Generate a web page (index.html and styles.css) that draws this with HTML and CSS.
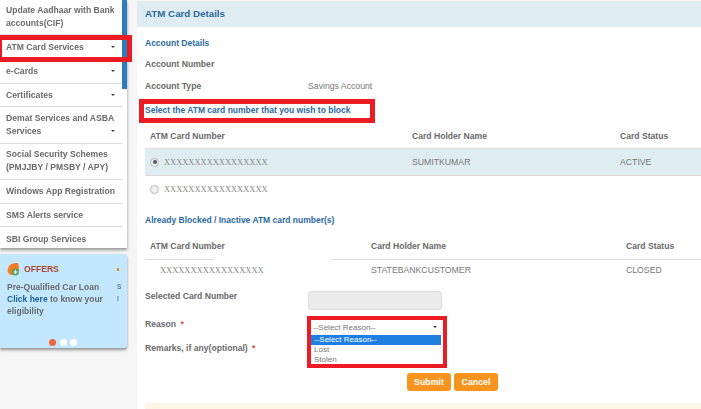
FILE: index.html
```html
<!DOCTYPE html>
<html lang="en">
<head>
<meta charset="utf-8">
<title>ATM Card Details</title>
<link rel="stylesheet" href="styles.css">
</head>
<body>
<div class="page">
  <aside class="side">
    <nav class="menu">
      <a class="item top">Update Aadhaar with Bank accounts(CIF)</a>
      <a class="item atm caret">ATM Card Services</a>
      <a class="item caret">e-Cards</a>
      <a class="item caret">Certificates</a>
      <a class="item tall caret low">Demat Services and ASBA Services</a>
      <a class="item tall">Social Security Schemes (PMJJBY / PMSBY / APY)</a>
      <a class="item">Windows App Registration</a>
      <a class="item">SMS Alerts service</a>
      <a class="item last">SBI Group Services</a>
      <span class="scroll"></span>
    </nav>
    <section class="offers">
      <div class="track">
        <div class="slide">
          <header class="offers-head">
            <svg class="offers-icon" width="13" height="14" viewBox="0 0 13 14" aria-hidden="true">
              <path d="M0.5 8 L2 4 Q5 0.5 11 1 L12 6 Q12 12 6 13 Q0.5 13 0.5 8Z" fill="#f47b20"/>
              <circle cx="8.5" cy="10" r="3.4" fill="#4aa564"/>
              <path d="M8.5 8v4M6.5 10h4" stroke="#fff" stroke-width="1.2"/>
            </svg>
            <span>OFFERS</span>
          </header>
          <p class="offers-text">Pre-Qualified Car Loan<br><b>Click here</b> to know your<br>eligibility</p>
        </div>
        <div class="peek">
          <header class="offers-head"><i class="offers-dash"></i></header>
          <p class="peek-text">S<br>l</p>
        </div>
      </div>
      <div class="dots"><i class="dot on"></i><i class="dot"></i><i class="dot"></i></div>
    </section>
  </aside>

  <main class="panel">
    <h1 class="panel-title">ATM Card Details</h1>
    <div class="body">
      <h2 class="sub first">Account Details</h2>
      <div class="kv"><b>Account Number</b><span></span></div>
      <div class="kv"><b>Account Type</b><span>Savings Account</span></div>
      <h2 class="sub select-title">Select the ATM card number that you wish to block</h2>

      <div class="cards active-cards">
        <div class="row head"><b>ATM Card Number</b><b>Card Holder Name</b><b>Card Status</b></div>
        <div class="row picked">
          <label class="num"><i class="radio on"></i><span class="mask">XXXXXXXXXXXXXXXXX</span></label>
          <span>SUMITKUMAR</span><span>ACTIVE</span>
        </div>
        <div class="row plain">
          <label class="num"><i class="radio"></i><span class="mask">XXXXXXXXXXXXXXXXX</span></label>
          <span></span><span></span>
        </div>
      </div>

      <h2 class="sub blocked-title">Already Blocked / Inactive ATM card number(s)</h2>

      <div class="cards blocked-cards">
        <div class="row head"><b>ATM Card Number</b><b>Card Holder Name</b><b>Card Status</b></div>
        <div class="row closed">
          <span class="mask indent">XXXXXXXXXXXXXXXXX</span>
          <span>STATEBANKCUSTOMER</span><span>CLOSED</span>
        </div>
      </div>

      <form class="form">
        <b class="label">Selected Card Number</b>
        <div class="readonly"></div>
        <b class="label">Reason <em>*</em></b>
        <div class="dropdown">
          <div class="select">--Select Reason--<i class="select-caret"></i></div>
          <ul class="options">
            <li class="sel">--Select Reason--</li>
            <li>Lost</li>
            <li>Stolen</li>
          </ul>
        </div>
        <b class="label">Remarks, if any(optional) <em>*</em></b>
        <div></div>
      </form>

      <div class="actions">
        <button class="btn" type="button">Submit</button>
        <button class="btn" type="button">Cancel</button>
      </div>
      <div class="note"></div>
    </div>
  </main>
</div>
<span class="mark mark-menu"></span>
<span class="mark mark-title"></span>
<span class="mark mark-reason"></span>
</body>
</html>
```

FILE: styles.css
```css
* { box-sizing: border-box; }
html, body { margin: 0; height: 100%; }
body {
  width: 701px;
  height: 409px;
  overflow: hidden;
  position: relative;
  background: #f5f5f5;
  font: 8.7px/13px "Liberation Sans", Arial, sans-serif;
  color: #666;
  filter: blur(.4px);
}
.page { display: flex; align-items: flex-start; height: 409px; }

/* sidebar */
.side { width: 127px; flex: none; }
.menu {
  position: relative;
  background: #fff;
  height: 248px;
  box-shadow: 0 2px 3px rgba(0,0,0,.4);
  display: flex;
  flex-direction: column;
}
.item {
  display: flex;
  align-items: center;
  flex: none;
  height: 23.7px;
  padding: 0 6px;
  margin-right: 5px;
  border-bottom: 1px solid #ddd;
  font-weight: bold;
  font-size: 8.6px;
  color: #6a6a6a;
  position: relative;
}
.item.top { height: 35px; }
.item.atm { height: 25px; }
.item.tall { height: 36.3px; }
.item.last { border-bottom: 0; }
.item.caret::after {
  content: "";
  position: absolute;
  right: 7px;
  top: 50%;
  margin-top: -1px;
  border: 2.5px solid transparent;
  border-top-color: #444;
  border-bottom: 0;
}
.item.low::after { margin-top: 5px; }
.scroll {
  position: absolute;
  right: 0;
  top: 0;
  width: 5px;
  height: 89px;
  background: #2b7dbc;
}

.offers {
  margin-top: 6px;
  height: 94px;
  padding: 8px 0 0 7px;
  background: #c2e7ff;
  border-radius: 0 3px 3px 0;
  box-shadow: 0 2px 3px rgba(0,0,0,.4);
  position: relative;
}
.track { display: flex; width: 113px; }
.slide { flex: 1; min-width: 0; }
.peek { flex: none; width: 3px; }
.offers-head {
  display: flex;
  align-items: center;
  gap: 4px;
  height: 14px;
  margin-bottom: 5px;
  font-weight: bold;
  font-size: 8.6px;
  color: #b0452f;
}
.offers-dash { margin-top: 1px; width: 2px; height: 3px; background: #f07f13; }
.offers-text {
  margin: 0;
  font-size: 8.5px;
  line-height: 12px;
  color: #6a6a6a;
  font-weight: bold;
  white-space: nowrap;
}
.offers-text b { color: #1f5f96; }
.peek-text {
  margin: 0;
  font-size: 6.5px;
  line-height: 12px;
  font-weight: bold;
  color: #777;
}
.dots { position: absolute; left: 49px; bottom: 2.5px; display: flex; gap: 3.7px; }
.dot { width: 7px; height: 7px; border-radius: 50%; background: #fff; }
.dot.on { background: #f0653a; }

/* main panel */
.panel {
  margin: 1px 0 0 10px;
  flex: 1;
  height: 408px;
  background: #fff;
}
.panel-title {
  margin: 0;
  height: 26px;
  padding: 0 8px;
  background: #dfecf2;
  font-size: 9.75px;
  line-height: 26px;
  color: #2a6a9e;
}
.body { padding-left: 8px; }
.sub { margin: 0; font-size: 8.5px; line-height: 13px; color: #2a6a9e; font-weight: bold; }
.sub.first { padding-top: 10px; height: 27px; }
.kv { display: grid; grid-template-columns: 163px 1fr; height: 21.5px; align-items: center; }
.kv b { color: #6a6a6a; font-size: 8.6px; }
.kv span { color: #777; }
.select-title { margin-top: 4px; height: 15px; padding-top: 3px; }
.row { display: grid; align-items: center; }
.active-cards { margin-top: 11px; }
.active-cards .row { grid-template-columns: 267px 208px 1fr; }
.blocked-cards .row { grid-template-columns: 226px 255px 1fr; }
.row b { color: #6a6a6a; font-size: 8.6px; padding-left: 5px; }
.row b + b { padding-left: 0; }
.row span { color: #777; }
.head { height: 22px; padding-bottom: 2.5px; }
.active-cards .head { border-bottom: 1px solid #ddd; }
.picked { height: 27px; background: #dfecf2; border-bottom: 1px solid #ddd; }
.plain { height: 26px; }
.closed { height: 22px; }
.num { display: flex; align-items: center; gap: 5px; padding-left: 5px; }
.radio {
  width: 9px; height: 9px; border-radius: 50%;
  background: #eee; border: 1px solid #bbb; position: relative; flex: none;
}
.radio.on::after {
  content: ""; position: absolute; left: 1.5px; top: 1.5px;
  width: 4px; height: 4px; border-radius: 50%; background: #555;
}
.row .mask {
  font: 8.45px/13px "Liberation Serif", "Times New Roman", serif;
  color: #888;
}
.mask.indent { padding-left: 15px; }
.blocked-title { margin-top: 11.5px; height: 16px; }
.blocked-cards { margin-top: 7px; }
.blocked-cards .head {
  height: 23px;
  padding-bottom: 3px;
  background:
    linear-gradient(#ddd, #ddd) left bottom / 69px 1px no-repeat,
    linear-gradient(#ddd, #ddd) 187px bottom / 100% 1px no-repeat;
}
.form {
  display: grid;
  grid-template-columns: 163px 1fr;
  grid-template-rows: 28px 24px 24px;
}
.label { color: #6a6a6a; font-size: 8.6px; padding-top: 8px; }
.label em { color: #e2492b; font-style: normal; margin-left: 2px; }
.readonly {
  width: 134px;
  height: 19px;
  margin-top: 9.5px;
  background: #ececec;
  border: 1px solid #ddd;
  border-radius: 3px;
}
.dropdown { position: relative; padding: 10.5px 0 0 3px; }
.select {
  width: 130px;
  height: 15px;
  padding-left: 2px;
  line-height: 15px;
  font-size: 8px;
  color: #777;
  background: #fff;
  position: relative;
}
.select-caret {
  position: absolute; right: 4px; top: 5.5px;
  border: 2.5px solid transparent; border-top-color: #333; border-bottom: 0;
}
.options {
  position: absolute;
  left: 3px;
  top: 25.5px;
  width: 130px;
  margin: 0;
  padding: 0;
  list-style: none;
  background: #fff;
  font-size: 8px;
  color: #777;
  z-index: 2;
}
.options li { height: 10px; line-height: 10px; padding-left: 3px; }
.options li.sel { background: #1e7fe0; color: #fff; }
.actions { display: flex; gap: 3px; padding-left: 262px; margin-top: 15.5px; height: 30px; }
.btn {
  height: 18px;
  padding: 0;
  width: 44px;
  border: 0;
  border-radius: 3px;
  background: #f7941d;
  color: #fff;
  font: bold 8.8px "Liberation Sans", Arial, sans-serif;
}
.note { height: 6px; background: #fdf6e8; }

/* red annotation boxes */
.mark { position: absolute; z-index: 5; border: 5px solid #ed1c24; }
.mark-menu { left: -3px; top: 35px; width: 135px; height: 27px; }
.mark-title { left: 139px; top: 99px; width: 236px; height: 24px; }
.mark-reason { left: 307px; top: 316px; width: 140px; height: 52px; border-width: 4px; }
```
